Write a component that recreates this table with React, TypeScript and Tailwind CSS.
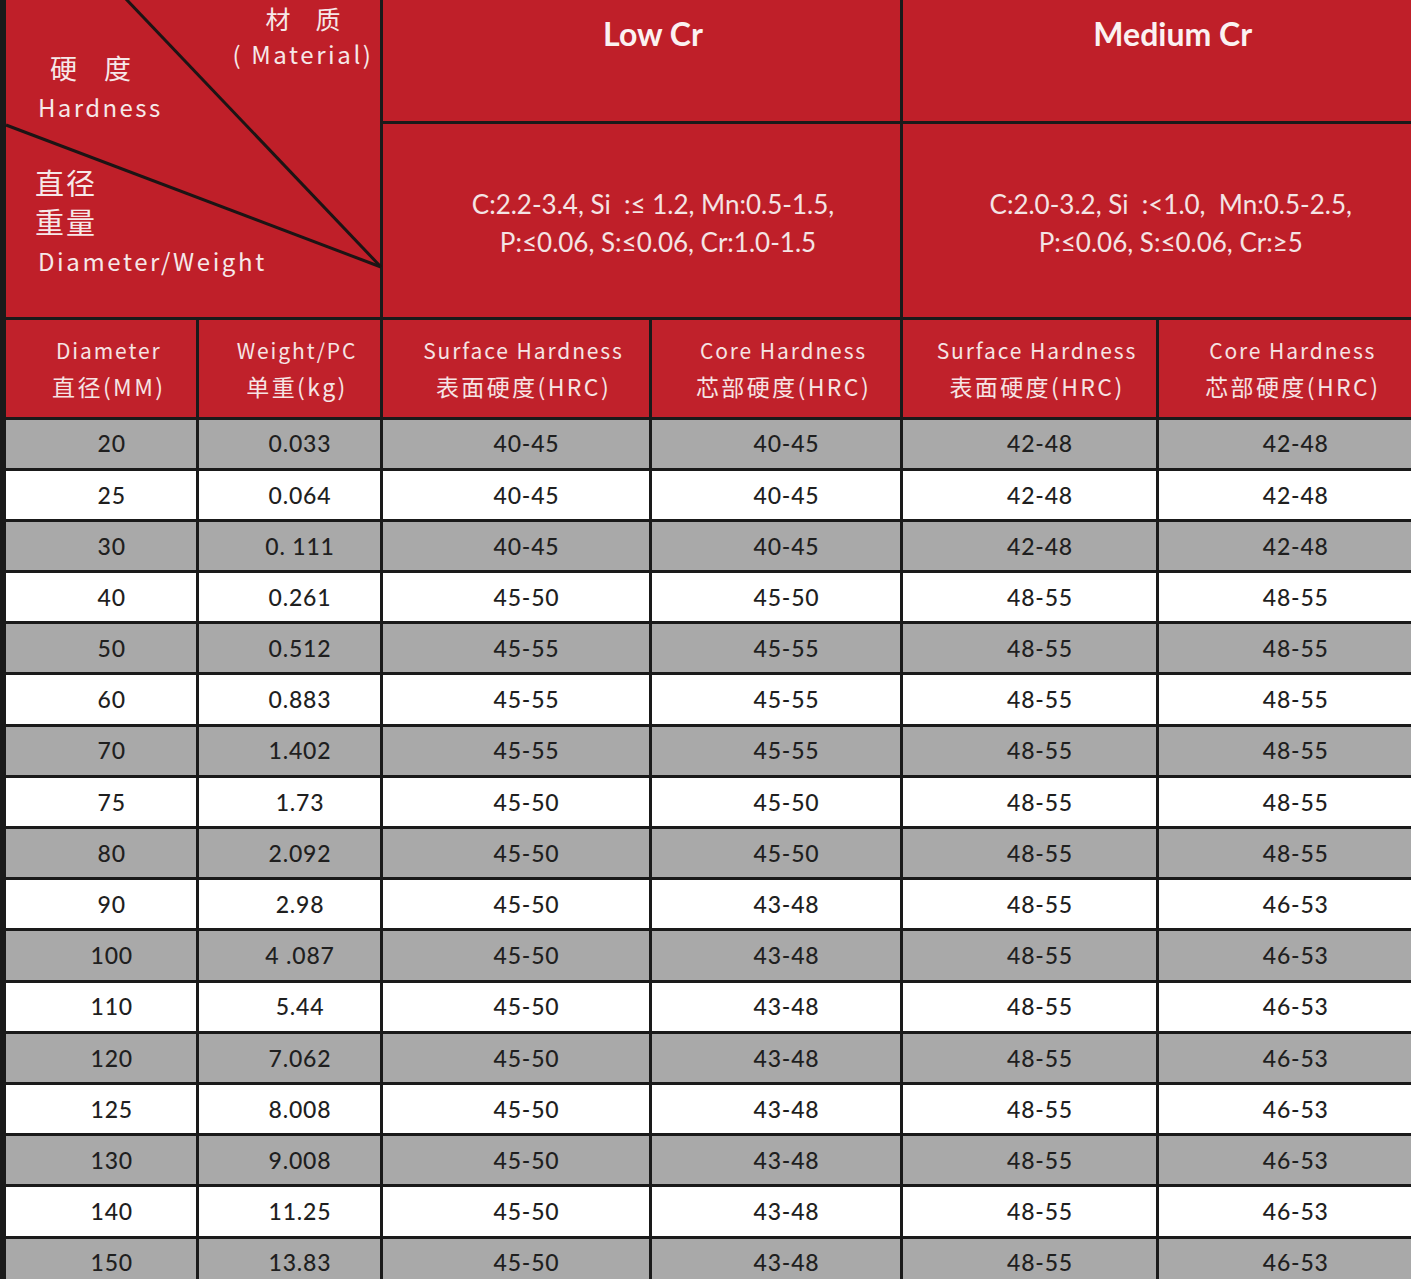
import React from "react";

// Hardness / weight table for grinding balls (low & medium chrome)
const rows = [
  ["20", "0.033", "40-45", "40-45", "42-48", "42-48"],
  ["25", "0.064", "40-45", "40-45", "42-48", "42-48"],
  ["30", "0. 111", "40-45", "40-45", "42-48", "42-48"],
  ["40", "0.261", "45-50", "45-50", "48-55", "48-55"],
  ["50", "0.512", "45-55", "45-55", "48-55", "48-55"],
  ["60", "0.883", "45-55", "45-55", "48-55", "48-55"],
  ["70", "1.402", "45-55", "45-55", "48-55", "48-55"],
  ["75", "1.73", "45-50", "45-50", "48-55", "48-55"],
  ["80", "2.092", "45-50", "45-50", "48-55", "48-55"],
  ["90", "2.98", "45-50", "43-48", "48-55", "46-53"],
  ["100", "4 .087", "45-50", "43-48", "48-55", "46-53"],
  ["110", "5.44", "45-50", "43-48", "48-55", "46-53"],
  ["120", "7.062", "45-50", "43-48", "48-55", "46-53"],
  ["125", "8.008", "45-50", "43-48", "48-55", "46-53"],
  ["130", "9.008", "45-50", "43-48", "48-55", "46-53"],
  ["140", "11.25", "45-50", "43-48", "48-55", "46-53"],
  ["150", "13.83", "45-50", "43-48", "48-55", "46-53"],
];

const colHeads = [
  ["Diameter", "直径(MM)"],
  ["Weight/PC", "单重(kg)"],
  ["Surface Hardness", "表面硬度(HRC)"],
  ["Core Hardness", "芯部硬度(HRC)"],
  ["Surface Hardness", "表面硬度(HRC)"],
  ["Core Hardness", "芯部硬度(HRC)"],
];

const cjk = { fontFamily: '"Noto Sans CJK SC", "Noto Sans", sans-serif' };
const lato = { fontFamily: 'Lato, "Noto Sans CJK SC", sans-serif' };

function CornerCell() {
  return (
    <div
      className="relative col-span-2 row-span-2 bg-[#bf1f29] text-[#f6e8e8] overflow-visible"
      style={cjk}
    >
      <svg
        className="absolute inset-0 overflow-visible"
        width="374"
        height="317"
        viewBox="0 0 374 317"
      >
        <line x1="119" y1="-2" x2="375" y2="267" stroke="#1c1414" strokeWidth="3" />
        <line x1="0" y1="125" x2="375" y2="267" stroke="#1c1414" strokeWidth="3" />
      </svg>
      <div className="absolute left-[222px] top-0 w-[150px] text-center leading-[36px]">
        <div className="text-[25px]">材　质</div>
        <div className="text-[24px] tracking-[2.6px]">( Material)</div>
      </div>
      <div className="absolute left-[32px] top-[48px] leading-[39px]">
        <div className="pl-[12px] text-[27px]">硬　度</div>
        <div className="text-[24px] tracking-[2.4px]">Hardness</div>
      </div>
      <div className="absolute left-[29px] top-[163px] leading-[39px]">
        <div className="text-[29px] tracking-[2px]">直径</div>
        <div className="text-[29px] tracking-[2px]">重量</div>
        <div className="pl-[3px] text-[24px] tracking-[2.6px]">Diameter/Weight</div>
      </div>
    </div>
  );
}

export default function App() {
  return (
    <div className="w-[1411px] h-[1279px] overflow-hidden bg-[#1a1a1a] pl-[6px]">
      <div className="grid grid-cols-[189.5px_181px_266px_248px_253px_1fr] grid-rows-[120.5px_193.5px_96.5px] auto-rows-[48.2px] gap-[3px]">
        <CornerCell />

        <div
          className="col-span-2 flex items-start justify-center pl-[24px] pt-[10px] bg-[#bf1f29] text-[32px] font-bold text-[#fbf1f1]"
          style={lato}
        >
          Low Cr
        </div>
        <div
          className="col-span-2 flex items-start justify-center pl-[32px] pt-[10px] bg-[#bf1f29] text-[32px] font-bold text-[#fbf1f1]"
          style={lato}
        >
          Medium Cr
        </div>

        <div
          className="col-span-2 flex flex-col items-center justify-center pl-[24px] pt-[5px] bg-[#bf1f29] text-[26px] leading-[38px] text-[#f4e4e4]"
          style={lato}
        >
          <div>C:2.2-3.4, Si&nbsp; :≤ 1.2, Mn:0.5-1.5,</div>
          <div className="pl-[10px]">P:≤0.06, S:≤0.06, Cr:1.0-1.5</div>
        </div>
        <div
          className="col-span-2 flex flex-col items-center justify-center pl-[28px] pt-[5px] bg-[#bf1f29] text-[26px] leading-[38px] text-[#f4e4e4]"
          style={lato}
        >
          <div>C:2.0-3.2, Si&nbsp; :&lt;1.0,&nbsp; Mn:0.5-2.5,</div>
          <div>P:≤0.06, S:≤0.06, Cr:≥5</div>
        </div>

        {colHeads.map(([en, zh], i) => (
          <div
            key={i}
            className="flex flex-col items-center justify-center pl-[16px] bg-[#c0212b] leading-[36px] text-[#f6e4e4]"
            style={cjk}
          >
            <div className="text-[21px] tracking-[1.9px]">{en}</div>
            <div className="text-[23px] tracking-[2.4px]">{zh}</div>
          </div>
        ))}

        {rows.map((row, r) =>
          row.map((val, c) => (
            <div
              key={`${r}-${c}`}
              className={`flex items-center justify-center pl-[22px] text-[23px] font-medium tracking-[0.8px] text-[#1f1f1f] ${
                r % 2 === 0 ? "bg-[#a9a9a9]" : "bg-white"
              }`}
              style={lato}
            >
              {val}
            </div>
          ))
        )}
      </div>
    </div>
  );
}
